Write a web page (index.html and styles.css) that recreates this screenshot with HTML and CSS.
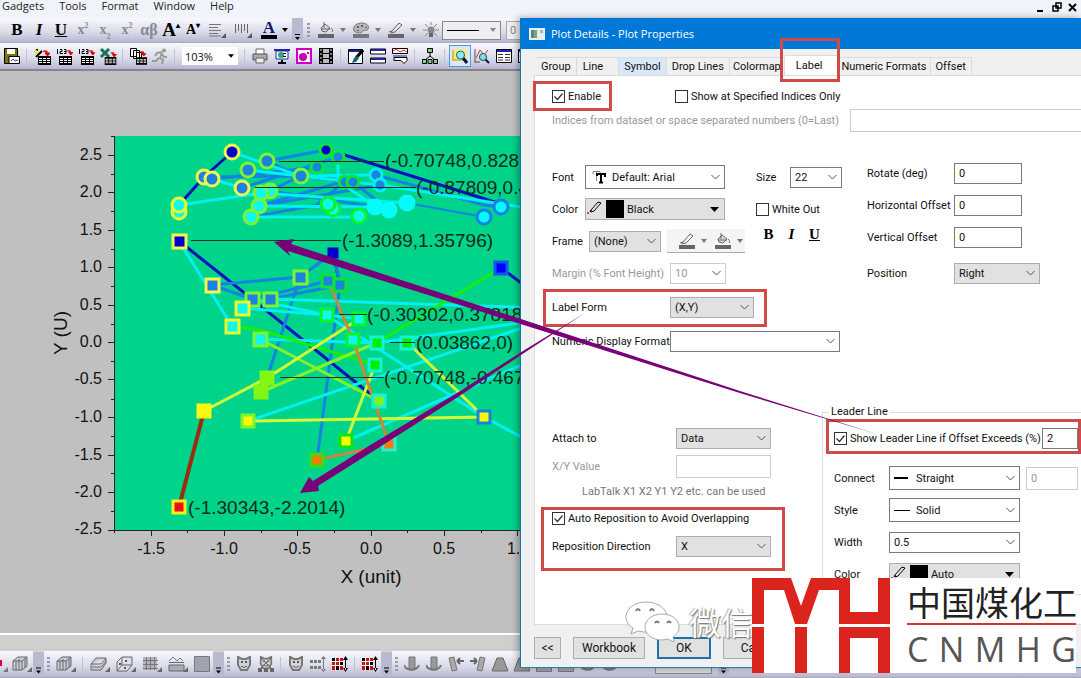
FILE: index.html
```html
<!DOCTYPE html>
<html lang="en">
<head>
<meta charset="utf-8">
<title>Plot Details - Plot Properties</title>
<link rel="stylesheet" href="styles.css">
</head>
<body>
<svg class="defs" aria-hidden="true">
  <defs>
    <symbol id="i-align" viewBox="0 0 18 16"><path d="M1 2.5h12M1 5.5h9M1 8.5h12M1 11.5h9M1 14h12" stroke="#777"/><path d="M18 11v5h-5z" fill="#555"/></symbol>
    <symbol id="i-bars" viewBox="0 0 18 16"><path d="M1.500 2v9M4.500 2v7M7.500 2v9M10.500 2v7M13.500 2v9" stroke="#666"/><path d="M18 11v5h-5z" fill="#555"/></symbol>
    <symbol id="i-down" viewBox="0 0 6 4"><path d="M0 0h6L3 4z" fill="currentColor"/></symbol>
    <symbol id="i-over" viewBox="0 0 11 25"><rect width="11" height="25" fill="#b9b9cf"/><path d="M3 16.500h5" stroke="#000"/><path d="M3 19h5l-2.500 3z"/></symbol>
    <symbol id="i-bucket" viewBox="0 0 16 16"><path d="M3 6l4-4 5 4-4 4-4-1z" fill="#ddd"/><path d="M3 6l4-4 5 4-4 4-4-1zM6 6V0M3 7h9M13 6c2 2 2 3 1 4" fill="none" stroke="#666"/><path d="M0 12h16v4H0z" fill="#666"/></symbol>
    <symbol id="i-palette" viewBox="0 0 16 16"><path d="M1 9C-1 3 5 1 9 1s8 3 6 6c-1 3-4 0-5 2s-5 3-9 0z" fill="#b5b5bd" stroke="#777"/><path d="M4 4h2v2H4zM8 3h2v2H8zM12 5h2v1h-2zM4 8h2v1H4z" fill="#666"/><path d="M0 12h16v4H0z" fill="#777"/></symbol>
    <symbol id="i-pencil" viewBox="0 0 16 16"><path d="M4 9l7-8 3 2-7 7-4 1zM1 10l3-1" fill="none" stroke="#666"/><path d="M0 12h16v4H0z" fill="#666"/></symbol>
    <symbol id="i-bulb" viewBox="0 0 16 16"><path d="M8 0v3M2 2l3 3M14 2l-3 3M0 8h4M12 8h4M2 14l3-3M14 14l-3-3" stroke="#888"/><circle cx="8" cy="8" r="3.500" fill="#888"/><path d="M6 11h4v4H6z" fill="#666"/></symbol>
    <symbol id="i-save" viewBox="0 0 16 16"><path d="M.5.5h13v15H.5z" fill="#770" stroke="#000"/><path d="M3 1h8v5H3z" fill="#fff"/><path d="M5 8.500h10.500v7H5z" fill="#fff" stroke="#000"/><path d="M7 13l2-2 2 2 3-1" fill="none" stroke="#44a"/></symbol>
    <symbol id="i-grid" viewBox="0 0 13 9"><path d="M0 0h13v9H0z"/><path d="M1 2h3v1H1zM5 2h3v1H5zM9 2h3v1H9zM1 4h3v1H1zM5 4h3v1H5zM9 4h3v1H9zM1 6h3v1H1zM5 6h3v1H5zM9 6h3v1H9z" fill="#fff"/></symbol>
    <symbol id="i-redarrow" viewBox="0 0 7 6"><path d="M0 1h4v2M2 3h5L4.500 6z" fill="#d00" stroke="#d00"/></symbol>
    <symbol id="i-wizard" viewBox="0 0 17 17"><path d="M2 9l6-6M1 3l2 1M3 1v2" stroke="#000" stroke-width="2"/><path d="M1 1l4 3-4 3" fill="#ee4"/><use href="#i-redarrow" x="9" y="2" width="7" height="6"/><use href="#i-grid" x="4" y="8" width="13" height="9"/></symbol>
    <symbol id="i-123" viewBox="0 0 17 17"><path d="M1.500 1v5M4 1.500h2v2H4v2h3M8 1.500h2v4H8M8 3.500h2" fill="none" stroke="#000"/><use href="#i-redarrow" x="11" y="2" width="6" height="5"/><use href="#i-grid" x="3" y="8" width="13" height="9"/></symbol>
    <symbol id="i-excel" viewBox="0 0 17 17"><path d="M1 1l8 8M9 1L1 9" stroke="#187060" stroke-width="3"/><use href="#i-redarrow" x="10" y="4" width="7" height="5"/><use href="#i-grid" x="4" y="9" width="13" height="8"/></symbol>
    <symbol id="i-copies" viewBox="0 0 17 17"><path d="M.5.5h6v8h-6zM3.500 2.500h6v8h-6zM6.500 4.500h5v8h-5z" fill="#fff" stroke="#000"/><use href="#i-redarrow" x="10" y="3" width="6" height="5"/><use href="#i-grid" x="6" y="9" width="11" height="8"/></symbol>
    <symbol id="i-run" viewBox="0 0 16 16"><circle cx="12" cy="2.500" r="2" fill="#999"/><path d="M10 4L5 5 3 8M10 5l-2 5 3 2-1 4M7 10l-3 3H0M10 6l2 3h3" fill="none" stroke="#999" stroke-width="2"/></symbol>
    <symbol id="i-print" viewBox="0 0 16 16"><path d="M4 6V1h8v5" fill="#fff" stroke="#666"/><path d="M1 6h14v6H1z" fill="#aaa" stroke="#555"/><path d="M4 10h8v5H4z" fill="#eee" stroke="#666"/></symbol>
    <symbol id="i-screen" viewBox="0 0 16 16"><path d="M0 1h16v2H0z" fill="#22a"/><path d="M2 3h12v8H2z" fill="#fff" stroke="#22a"/><circle cx="7" cy="7" r="3" fill="#2a7"/><path d="M9 5h3v1H9zM9 8h3v1H9zM7 12h2v2h3v2H4v-2h3z" fill="#000"/></symbol>
    <symbol id="i-disc" viewBox="0 0 16 16"><path d="M1 1h14v14H1z" fill="#fff" stroke="#c0b" stroke-width="2"/><circle cx="7" cy="9" r="4" fill="#c0b"/><path d="M11 4h2v2h-2z" fill="#c0b"/></symbol>
    <symbol id="i-film" viewBox="0 0 16 16"><path d="M1 0h14v16H1z"/><path d="M5 1h6v4H5zM5 6h6v4H5zM5 11h6v4H5z" fill="#bbb"/><path d="M3 1v15M13 1v15" stroke="#fff" stroke-dasharray="2 2"/></symbol>
    <symbol id="i-brush" viewBox="0 0 16 16"><path d="M.5 1.500h14v14H.5z" fill="#fff" stroke="#000"/><path d="M1 2h13v2H1z" fill="#22a"/><path d="M15 2L8 10" stroke="#000" stroke-width="3"/><path d="M9 8l2 2-3 4-4 1 2-5z" fill="#167"/></symbol>
    <symbol id="i-bands" viewBox="0 0 16 16"><path d="M.5 1h15v5H.5zM.5 10h15v5H.5z" fill="#fff" stroke="#000"/><path d="M1 1h14v2H1zM1 10h14v2H1z" fill="#22a"/></symbol>
    <symbol id="i-chart" viewBox="0 0 16 16"><path d="M.5.5h15v5H.5zM2 9.500h13v3l-3 3-3-3H2z" fill="#fff" stroke="#000"/><path d="M1 3l3-2 4 3 4-2 3 2" fill="none" stroke="#d22"/><path d="M1 8h14" stroke="#22a"/></symbol>
    <symbol id="i-tree" viewBox="0 0 16 16"><path d="M8 5v4M3 12l5-4 5 4" fill="none" stroke="#000"/><path d="M5.500.5h5v4h-5zM.5 11.500h4v4h-4zM6 11.500h4v4H6zM11.500 11.500h4v4h-4z" fill="#8c8" stroke="#000"/></symbol>
    <symbol id="i-zoom" viewBox="0 0 16 16"><path d="M0 1h15v12H0z" fill="#f5ea86"/><path d="M1 13V2M1 12h14" stroke="#b90"/><path d="M11 10l4 5" stroke="#114" stroke-width="3"/><circle cx="8.500" cy="7" r="4" fill="#8ee" stroke="#168"/></symbol>
    <symbol id="i-find" viewBox="0 0 16 16"><path d="M1 1v14M1 14h5" stroke="#555"/><path d="M2 10l4-8 4 5 4-5" fill="none" stroke="#d33"/><path d="M11 11l4 4" stroke="#114" stroke-width="2"/><circle cx="9" cy="9" r="3.500" fill="#8dd" stroke="#156"/></symbol>
    <symbol id="i-list" viewBox="0 0 16 16"><path d="M.5 1.500h15v13H.5z" fill="#fff" stroke="#000"/><path d="M1 2h14v2H1z" fill="#22a"/><path d="M2 6.500h5M9 6.500h5M2 9.500h5M9 9.500h5M2 12h5M9 12h5" stroke="#333"/></symbol>
    <symbol id="i-cube" viewBox="0 0 20 16"><path d="M1 5l5-4h9v9l-5 4H1zM1 5h9v9M10 5l5-4M4 5v9M7 3v11M13 3v9" fill="#ccd" stroke="#666"/><path d="M20 11v5h-5z" fill="#666"/></symbol>
    <symbol id="i-layers" viewBox="0 0 20 16"><path d="M1 8l5-6h10v5l-5 7H1zM2 8h9l5-6M2 11h9l5-6" fill="#ccd" stroke="#666"/><path d="M20 11v5h-5z" fill="#666"/></symbol>
    <symbol id="i-box" viewBox="0 0 20 16"><path d="M1 6l5-5h10v8l-5 6H1zM6 1v8h10M6 9l-5 6" fill="#dde" stroke="#666"/><path d="M3 7h2v2H3zM9 4h2v2H9zM8 11h2v2H8z" fill="#555"/><path d="M20 11v5h-5z" fill="#666"/></symbol>
    <symbol id="i-mesh" viewBox="0 0 20 16"><path d="M1 1h14v13H1z" fill="#b4b4c0"/><path d="M1 4.500h15M1 8.500h15M1 12.500h15M4.500 1v13M8.500 1v13M12.500 1v13" stroke="#777"/><path d="M20 11v5h-5z" fill="#666"/></symbol>
    <symbol id="i-split" viewBox="0 0 20 16"><path d="M1 5l4-4 4 4 3-3 3 3" fill="none" stroke="#777"/><path d="M1 6.500h15M1 9h15v6H1z" fill="#aab" stroke="#666"/><path d="M20 11v5h-5z" fill="#666"/></symbol>
    <symbol id="i-solid" viewBox="0 0 16 16"><path d="M.5.5h15v15H.5z" fill="#a2a3b2" stroke="#777"/></symbol>
    <symbol id="i-mask" viewBox="0 0 16 16"><path d="M2 1l4 2h4l4-2v8l-3 5H5L2 9z" fill="#d4d4dc" stroke="#777" stroke-width="2"/><path d="M5 5h2v2H5zM9 5h2v2H9z" fill="#555"/><path d="M5 10q3 3 6 0" fill="none" stroke="#555"/></symbol>
    <symbol id="i-maskx" viewBox="0 0 16 16"><use href="#i-mask" width="16" height="14"/><path d="M2 1l12 12M14 1L2 13" stroke="#666"/><path d="M0 12h4v4H0zM6 12h4v4H6zM12 12h4v4h-4z" fill="#666"/></symbol>
    <symbol id="i-dots" viewBox="0 0 16 16"><path d="M0 4h3v3H0zM4 4h3v3H4zM8 4h3v3H8zM0 10h3v3H0zM4 10h3v3H4zM8 10h3v3H8zM13 2h1v12h-1zM11 3l2.500-3L16 3zM11 13l2.500 3 2.500-3z" fill="currentColor"/></symbol>
    <symbol id="i-red" viewBox="0 0 16 16"><path d="M0 2h11v12H0z" fill="#c21414"/><path d="M0 5.500h11M0 9.500h11M3.500 2v12M7.500 2v12" stroke="#fff"/><path d="M0 2h3v3H0zM8 6h3v3H8zM4 10h3v4H4zM13 2h1v12h-1zM11 4l2.500-4L16 4zM11 12l2.500 4 2.500-4z"/></symbol>
    <symbol id="i-rot" viewBox="0 0 16 16"><path d="M5 1h6v13H5z" fill="#999" stroke="#777"/><path d="M0 9c2 6 13 6 15 0" fill="none" stroke="#777" stroke-width="2"/></symbol>
    <symbol id="i-tilt" viewBox="0 0 16 16"><path d="M1 2l5-1 3 13-5 1z" fill="#aaa" stroke="#777"/><path d="M9 5h7M9 5l3-3M9 5l3 3" fill="none" stroke="#666" stroke-width="2"/></symbol>
    <symbol id="i-tiltr" viewBox="0 0 16 16"><path d="M15 2l-5-1-3 13 5 1z" fill="#aaa" stroke="#777"/><path d="M0 5h7M7 5L4 2M7 5L4 8" fill="none" stroke="#666" stroke-width="2"/></symbol>
    <symbol id="i-trap" viewBox="0 0 16 16"><path d="M5 2h6l5 13H0z" fill="#999" stroke="#666"/></symbol>
    <symbol id="i-pen" viewBox="0 0 16 14"><path d="M4 9l7-8 3 1-7 8-3 1zM0 12h2M3 11l1-2" fill="none" stroke="#000"/></symbol>
  </defs>
</svg>

<div class="app">
  <header class="menubar">
    <nav class="menus">
      <button type="button">Gadgets</button><button type="button">Tools</button><button type="button">Format</button><button type="button">Window</button><button type="button">Help</button>
    </nav>
    <svg class="winctl" viewBox="0 0 44 14" aria-hidden="true"><path d="M2 11h6" stroke="#000" stroke-width="2"/><path d="M21 3h5v5h-5zM18 6h5v5h-5z" fill="#fff" stroke="#000" stroke-width="1.500"/><path d="M34 4l7 7M41 4l-7 7" stroke="#000" stroke-width="2"/></svg>
  </header>

  <div class="toolbar format">
    <button type="button" class="cell serif">B</button>
    <button type="button" class="cell serif"><i>I</i></button>
    <button type="button" class="cell serif"><u>U</u></button>
    <button type="button" class="cell serif dim">x<sup>2</sup></button>
    <button type="button" class="cell serif dim">x<sub>2</sub></button>
    <button type="button" class="cell serif dim">x<sup>2</sup></button>
    <button type="button" class="cell serif dim big">αβ</button>
    <button type="button" class="cell serif grow">A<sup>▴</sup></button>
    <button type="button" class="cell serif shrink">A<sup>▾</sup></button>
    <button type="button" class="cell wide"><svg width="18" height="16"><use href="#i-align"/></svg></button>
    <button type="button" class="cell wide"><svg width="18" height="16"><use href="#i-bars"/></svg></button>
    <button type="button" class="cell wide serif"><span class="fontcolor">A</span></button>
    <svg class="drop dark" width="6" height="4"><use href="#i-down"/></svg>
    <svg class="over" width="11" height="25"><use href="#i-over"/></svg>
    <span class="grip"></span>
    <button type="button" class="cell"><svg width="16" height="16"><use href="#i-bucket"/></svg></button>
    <svg class="drop" width="6" height="4"><use href="#i-down"/></svg>
    <button type="button" class="cell"><svg width="16" height="16"><use href="#i-palette"/></svg></button>
    <svg class="drop" width="6" height="4"><use href="#i-down"/></svg>
    <button type="button" class="cell"><svg width="16" height="16"><use href="#i-pencil"/></svg></button>
    <svg class="drop" width="6" height="4"><use href="#i-down"/></svg>
    <button type="button" class="cell"><svg width="16" height="16"><use href="#i-bulb"/></svg></button>
    <button type="button" class="linebox" aria-label="Line style"><span></span><svg width="6" height="4"><use href="#i-down"/></svg></button>
    <input class="zero" value="0" aria-label="Line width">
  </div>

  <div class="toolbar standard">
    <button type="button" class="cell"><svg width="16" height="16"><use href="#i-save"/></svg></button>
    <span class="sep"></span>
    <button type="button" class="cell"><svg width="17" height="17"><use href="#i-wizard"/></svg></button>
    <button type="button" class="cell"><svg width="17" height="17"><use href="#i-123"/></svg></button>
    <button type="button" class="cell"><svg width="17" height="17"><use href="#i-123"/></svg></button>
    <button type="button" class="cell"><svg width="17" height="17"><use href="#i-excel"/></svg></button>
    <span class="sep"></span>
    <button type="button" class="cell"><svg width="17" height="17"><use href="#i-copies"/></svg></button>
    <button type="button" class="cell"><svg width="16" height="16"><use href="#i-run"/></svg></button>
    <span class="sep"></span>
    <select class="zoom" aria-label="Zoom"><option>103%</option></select>
    <span class="sep"></span>
    <button type="button" class="cell"><svg width="16" height="16"><use href="#i-print"/></svg></button>
    <button type="button" class="cell"><svg width="16" height="16"><use href="#i-screen"/></svg></button>
    <button type="button" class="cell"><svg width="16" height="16"><use href="#i-disc"/></svg></button>
    <button type="button" class="cell"><svg width="16" height="16"><use href="#i-film"/></svg></button>
    <span class="sep"></span>
    <button type="button" class="cell"><svg width="16" height="16"><use href="#i-brush"/></svg></button>
    <button type="button" class="cell"><svg width="16" height="16"><use href="#i-bands"/></svg></button>
    <button type="button" class="cell"><svg width="16" height="16"><use href="#i-chart"/></svg></button>
    <span class="sep"></span>
    <button type="button" class="cell"><svg width="16" height="16"><use href="#i-tree"/></svg></button>
    <span class="sep"></span>
    <button type="button" class="cell on"><svg width="16" height="16"><use href="#i-zoom"/></svg></button>
    <button type="button" class="cell"><svg width="16" height="16"><use href="#i-find"/></svg></button>
    <button type="button" class="cell"><svg width="16" height="16"><use href="#i-list"/></svg></button>
    <button type="button" class="cell"><svg width="16" height="16"><use href="#i-list"/></svg></button>
  </div>

  <main class="workspace">
    <svg class="graph" viewBox="0 71 540 562" width="540" height="562">
      <rect x="115" y="136" width="425" height="394" fill="#00d48a"/>
      <g fill="none" stroke-width="3">
        <g stroke="#0010c0"><path d="M179 205L204 177L232 152"/><path d="M338 153L501 204"/><path d="M179 241L252 299L379 401"/><path d="M333 253L340 285"/><path d="M501 268L540 297"/></g>
        <g stroke="#1484e4"><path d="M204 177L300 176L345 181"/><path d="M212 179L317 167"/><path d="M267 161L326 150"/><path d="M242 188L338 157"/><path d="M248 170L353 182L389 210"/><path d="M259 206L380 185"/><path d="M376 175L484 205L501 207"/><path d="M251 217L317 205L345 181L259 206"/><path d="M267 161L300 176L270 191L376 207"/><path d="M212 285L300 277L333 253"/><path d="M212 285L252 299"/><path d="M252 299L328 281"/><path d="M300 277L267 378"/><path d="M333 253L340 285L317 460"/><path d="M270 299L340 285"/></g>
        <g stroke="#00f0f4"><path d="M232 152L300 176L376 175"/><path d="M242 188L212 179"/><path d="M179 205L261 193L407 203"/><path d="M248 170L380 185L540 210"/><path d="M251 217H359"/><path d="M259 206L376 207"/><path d="M338 157V181L376 207"/><path d="M179 241L232 326"/><path d="M242 308L326 315L359 319"/><path d="M270 299L540 308"/><path d="M252 299L326 315"/><path d="M260 339L376 343L540 320"/><path d="M248 421L540 322"/><path d="M346 441L540 357"/><path d="M326 315L484 417L540 447"/></g>
        <path d="M407 203L484 217" stroke="#1484e4" stroke-width="2"/>
        <g stroke="#15ef10"><path d="M232 326L260 330L375 365"/><path d="M376 343L501 268"/></g>
        <g stroke="#83f426"><path d="M260 339L379 401"/><path d="M261 392L376 343"/></g>
        <g stroke="#d5fa35"><path d="M204 411L267 378L359 319"/><path d="M248 421L484 417L407 342"/><path d="M346 441L375 365"/></g>
        <path d="M204 411L179 507" stroke="#982d10" stroke-width="4"/><path d="M328 281L353 340L389 444L317 460" stroke="#c98a38"/>
      </g>
      <g stroke-width="3">
        <g fill="#1c82e2" stroke="#f4f84a"><circle cx="204" cy="177" r="7"/><circle cx="212" cy="179" r="7"/><circle cx="242" cy="188" r="7"/><rect x="206" y="279" width="13" height="13"/></g>
        <g fill="#0000d0" stroke="#f4f84a"><circle cx="232" cy="152" r="7"/><rect x="173" y="235" width="13" height="13"/></g>
        <g fill="#10f8ec" stroke="#eaf82e"><circle cx="179" cy="212" r="7"/><circle cx="179" cy="205" r="7"/></g>
        <g fill="#1c82e2" stroke="#7cf432"><circle cx="267" cy="161" r="7"/><circle cx="248" cy="170" r="7"/><circle cx="301" cy="176" r="7"/><rect x="246" y="293" width="13" height="13"/><rect x="264" y="293" width="13" height="13"/><rect x="294" y="271" width="13" height="13"/></g>
        <g fill="#10f8ec" stroke="#eaf82e"><rect x="236" y="302" width="13" height="13"/><rect x="226" y="320" width="13" height="13"/></g>
        <g fill="#10f8ec" stroke="#7cf432"><circle cx="270" cy="191" r="7"/><circle cx="261" cy="193" r="7"/><circle cx="259" cy="206" r="7"/><circle cx="251" cy="217" r="7"/><rect x="254" y="333" width="13" height="13"/></g>
        <g fill="#1c82e2" stroke="#0be634"><circle cx="338" cy="157" r="6"/><circle cx="317" cy="167" r="6"/><circle cx="345" cy="182" r="6"/><circle cx="353" cy="182" r="6"/><rect x="322" y="275" width="12" height="12"/><rect x="334" y="279" width="12" height="12"/></g>
        <circle cx="326" cy="150" r="6" fill="#0000d0" stroke="#0be634"/>
        <g fill="#10f8ec" stroke="#0cf32a"><circle cx="333" cy="209" r="7"/><circle cx="328" cy="204" r="7"/><circle cx="359" cy="216" r="7"/><rect x="321" y="309" width="12" height="12"/><rect x="353" y="313" width="12" height="12"/><rect x="347" y="334" width="12" height="12"/></g>
        <g fill="#1c82e2" stroke="#08edf0"><circle cx="376" cy="175" r="6"/><circle cx="380" cy="185" r="6"/></g>
        <g fill="#08fbfa" stroke="#08fbfa"><circle cx="375" cy="207" r="7"/><circle cx="389" cy="210" r="7"/><circle cx="407" cy="203" r="7"/></g>
        <g fill="#08fbfa" stroke="#1484e4"><circle cx="501" cy="207" r="7"/><circle cx="484" cy="217" r="7"/></g>
        <g fill="#00f000" stroke="#15f2d8"><rect x="371" y="337" width="12" height="12"/><rect x="401" y="337" width="12" height="12"/><rect x="369" y="359" width="12" height="12"/></g>
        <rect x="373" y="395" width="12" height="12" fill="#80f414" stroke="#15f2d8"/>
        <rect x="329" y="249" width="8" height="8" fill="#0000d0" stroke="#0000d0"/>
        <rect x="495" y="262" width="12" height="12" fill="#0000f8" stroke="#1456ee"/>
        <rect x="478" y="411" width="12" height="12" fill="#f8f800" stroke="#1484e4"/>
        <g fill="#83f614" stroke="#83f614"><rect x="261" y="372" width="12" height="12"/><rect x="255" y="386" width="12" height="12"/></g>
        <rect x="198" y="405" width="12" height="12" fill="#f8f810" stroke="#f8f810"/>
        <rect x="242" y="415" width="12" height="12" fill="#f8f800" stroke="#7cf432"/>
        <rect x="340" y="435" width="12" height="12" fill="#f8f800" stroke="#0ee314"/>
        <rect x="311" y="454" width="12" height="12" fill="#ee7c08" stroke="#36df10"/>
        <rect x="383" y="438" width="12" height="12" fill="#ee7c10" stroke="#30ebd2"/>
        <rect x="173" y="501" width="12" height="12" fill="#e81010" stroke="#f4ee20"/>
      </g>
      <path d="M279 161.500H384M255 187.500H416M191 240.500H341M339 314.500H367M390 342.500H415M280 377.500H384" stroke="#10341f"/>
      <g class="datalabel">
        <text x="385" y="167">(-0.70748,0.828</text><text x="416" y="194">(-0.87809,0.4</text><text x="342" y="247">(-1.3089,1.35796)</text><text x="367" y="321">(-0.30302,0.37818</text><text x="416" y="349">(0.03862,0)</text><text x="384" y="384">(-0.70748,-0.467</text><text x="188" y="514">(-1.30343,-2.2014)</text>
      </g>
      <path d="M114.500 136V530.500H540M108 155.500h6M108 192.500h6M108 230.500h6M108 267.500h6M108 305.500h6M108 342.500h6M108 379.500h6M108 417.500h6M108 455.500h6M108 492.500h6M108 530.500h6M111 136.500h3M111 174.500h3M111 211.500h3M111 249.500h3M111 286.500h3M111 324.500h3M111 361.500h3M111 399.500h3M111 436.500h3M111 473.500h3M111 511.500h3M151.500 530v6M224.500 530v6M297.500 530v6M371.500 530v6M444.500 530v6M517.500 530v6M114.500 530v3M187.500 530v3M261.500 530v3M334.500 530v3M407.500 530v3M481.500 530v3" fill="none" stroke="#222"/>
      <g class="tick end"><text x="102" y="160">2.5</text><text x="102" y="197">2.0</text><text x="102" y="235">1.5</text><text x="102" y="272">1.0</text><text x="102" y="310">0.5</text><text x="102" y="347">0.0</text><text x="102" y="384">-0.5</text><text x="102" y="422">-1.0</text><text x="102" y="460">-1.5</text><text x="102" y="497">-2.0</text><text x="102" y="534">-2.5</text></g>
      <g class="tick mid"><text x="151" y="554">-1.5</text><text x="224" y="554">-1.0</text><text x="297" y="554">-0.5</text><text x="371" y="554">0.0</text><text x="444" y="554">0.5</text><text x="518" y="554">1.0</text></g>
      <g class="axis"><text x="371" y="583">X (unit)</text><text transform="translate(67 333) rotate(-90)">Y (U)</text></g>
    </svg>
  </main>
  <div class="strip"></div>

  <div class="toolbar bottom">
    <svg width="11" height="16"><path d="M0 4h2v6H0z" fill="#e00030"/><path d="M8 11v5H3z" fill="#777"/></svg>
    <button type="button" class="cell"><svg width="20" height="16"><use href="#i-cube"/></svg></button>
    <svg class="over" width="11" height="26"><use href="#i-over"/></svg>
    <span class="grip"></span>
    <button type="button" class="cell wide"><svg width="20" height="16"><use href="#i-cube"/></svg></button>
    <span class="sep"></span>
    <button type="button" class="cell wide"><svg width="20" height="16"><use href="#i-layers"/></svg></button>
    <button type="button" class="cell wide"><svg width="20" height="16"><use href="#i-box"/></svg></button>
    <button type="button" class="cell wide"><svg width="20" height="16"><use href="#i-mesh"/></svg></button>
    <button type="button" class="cell wide"><svg width="20" height="16"><use href="#i-split"/></svg></button>
    <button type="button" class="cell"><svg width="16" height="16"><use href="#i-solid"/></svg></button>
    <svg class="over" width="11" height="26"><use href="#i-over"/></svg>
    <span class="grip"></span>
    <button type="button" class="cell"><svg width="16" height="16"><use href="#i-mask"/></svg></button>
    <button type="button" class="cell"><svg width="16" height="16"><use href="#i-maskx"/></svg></button>
    <span class="sep"></span>
    <button type="button" class="cell"><svg width="16" height="16"><use href="#i-mask"/></svg></button>
    <button type="button" class="cell gray"><svg width="16" height="16"><use href="#i-dots"/></svg></button>
    <button type="button" class="cell"><svg width="16" height="16"><use href="#i-red"/></svg></button>
    <span class="sep"></span>
    <button type="button" class="cell"><svg width="16" height="16"><use href="#i-red"/></svg></button>
    <svg class="over" width="11" height="26"><use href="#i-over"/></svg>
    <span class="grip"></span>
    <button type="button" class="cell"><svg width="16" height="16"><use href="#i-rot"/></svg></button>
    <button type="button" class="cell"><svg width="16" height="16"><use href="#i-rot"/></svg></button>
    <button type="button" class="cell"><svg width="16" height="16"><use href="#i-tilt"/></svg></button>
    <button type="button" class="cell"><svg width="16" height="16"><use href="#i-tiltr"/></svg></button>
    <button type="button" class="cell"><svg width="16" height="16"><use href="#i-trap"/></svg></button>
    <button type="button" class="cell"><svg width="16" height="16"><use href="#i-trap"/></svg></button>
    <button type="button" class="cell"><svg width="16" height="16"><use href="#i-solid"/></svg></button>
    <button type="button" class="cell"><svg width="16" height="16"><use href="#i-solid"/></svg></button>
    <button type="button" class="cell"><svg width="16" height="16"><use href="#i-rot"/></svg></button>
    <button type="button" class="cell"><svg width="16" height="16"><use href="#i-rot"/></svg></button>
    <span class="slot"></span>
    <svg class="over" width="11" height="26"><use href="#i-over"/></svg>
  </div>
</div>

<section class="dialog" role="dialog" aria-labelledby="dlg-title">
  <div class="titlebar">
    <svg width="16" height="12" viewBox="0 0 16 12" aria-hidden="true"><path d="M0 0h16v12H0z" fill="#e4f0ee"/><path d="M2 2h6v8H2z" fill="#59848c"/><path d="M5 2h3v8H5z" fill="#7da66f"/><path d="M11 2h3v3h-3z" fill="#9bc"/></svg>
    <h1 id="dlg-title">Plot Details - Plot Properties</h1>
  </div>
  <div class="tabs" role="tablist">
    <button type="button" role="tab">Group</button><button type="button" role="tab" class="line">Line</button><button type="button" role="tab" class="hot">Symbol</button><button type="button" role="tab">Drop Lines</button><button type="button" role="tab" class="tight">Colormap</button><button type="button" role="tab" class="active" aria-selected="true">Label</button><button type="button" role="tab" class="tight">Numeric Formats</button><button type="button" role="tab">Offset</button>
  </div>
  <form class="panel">
    <div class="toprow">
      <label class="check"><input type="checkbox" checked>Enable</label>
      <label class="check"><input type="checkbox">Show at Specified Indices Only</label>
    </div>
    <div class="indices">
      <label for="indices">Indices from dataset or space separated numbers (0=Last)</label>
      <input id="indices" disabled>
    </div>

    <div class="upper">
      <div class="texts">
        <div class="row">
          <label for="font" class="l-s">Font</label>
          <span class="pick w140"><svg width="14" height="14" viewBox="0 0 14 14"><path d="M1 4V1.500h7V4M4.500 2v9" fill="none" stroke="#888"/><path d="M5 6V4h8v3M9 4v9M7 12.500h4" fill="none" stroke="#000" stroke-width="2"/></svg><select id="font" class="white tall"><option>Default: Arial</option></select></span>
          <label for="size" class="l-size">Size</label>
          <select id="size" class="white w52"><option>22</option></select>
        </div>
        <div class="row">
          <label for="color" class="l-s">Color</label>
          <span class="pick ink w140"><svg width="40" height="18" viewBox="0 0 40 18"><use href="#i-pen" x="1" y="1" width="16" height="14"/><path d="M20 0h18v18H20z"/></svg><select id="color" class="solid"><option>Black</option></select></span>
          <label class="check push"><input type="checkbox">White Out</label>
        </div>
        <div class="row">
          <label for="frame" class="l-m">Frame</label>
          <select id="frame" class="w72"><option>(None)</option></select>
          <div class="mini">
            <button type="button" aria-label="Border color"><svg width="16" height="16"><use href="#i-pencil"/></svg></button><svg class="drop" width="6" height="4"><use href="#i-down"/></svg>
            <button type="button" aria-label="Fill color"><svg width="16" height="16"><use href="#i-bucket"/></svg></button><svg class="drop" width="6" height="4"><use href="#i-down"/></svg>
          </div>
          <div class="biu"><button type="button">B</button><button type="button"><i>I</i></button><button type="button"><u>U</u></button></div>
        </div>
        <div class="row">
          <label for="margin" class="l-l off">Margin (% Font Height)</label>
          <select id="margin" class="white w56" disabled><option>10</option></select>
        </div>
        <div class="row high">
          <label for="form" class="l-l">Label Form</label>
          <select id="form" class="w84"><option>(X,Y)</option></select>
        </div>
        <div class="row">
          <label for="numfmt" class="l-l">Numeric Display Format</label>
          <select id="numfmt" class="white w170"><option></option></select>
        </div>
      </div>
      <div class="place">
        <div class="row"><label for="rot">Rotate (deg)</label><input id="rot" value="0"></div>
        <div class="row"><label for="hoff">Horizontal Offset</label><input id="hoff" value="0"></div>
        <div class="row"><label for="voff">Vertical Offset</label><input id="voff" value="0"></div>
        <div class="row pos"><label for="pos">Position</label><select id="pos" class="w86"><option>Right</option></select></div>
      </div>
    </div>

    <div class="lower">
      <div class="attach">
        <div class="row"><label for="attach">Attach to</label><select id="attach" class="w95"><option>Data</option></select></div>
        <div class="row"><label for="xy" class="off">X/Y Value</label><input id="xy" class="w95" disabled></div>
        <p class="hint">LabTalk X1 X2 Y1 Y2 etc. can be used</p>
        <div class="row"><label class="check"><input type="checkbox" checked>Auto Reposition to Avoid Overlapping</label></div>
        <div class="row"><label for="dir">Reposition Direction</label><select id="dir" class="w95"><option>X</option></select></div>
      </div>
      <fieldset class="leader">
        <legend>Leader Line</legend>
        <div class="row first"><label class="check"><input type="checkbox" checked>Show Leader Line if Offset Exceeds (%)</label><input value="2" class="w36" aria-label="Offset percent"></div>
        <div class="row"><label for="conn">Connect</label><span class="pick dash bold w131"><svg width="14" height="2"><path d="M0 1h14" stroke="#000" stroke-width="2"/></svg><select id="conn" class="white tall"><option>Straight</option></select></span><input class="w52" value="0" disabled aria-label="Connect value"></div>
        <div class="row"><label for="style">Style</label><span class="pick dash w131"><svg width="16" height="1"><path d="M0 .5h16" stroke="#000"/></svg><select id="style" class="white tall"><option>Solid</option></select></span></div>
        <div class="row"><label for="width">Width</label><select id="width" class="white w131"><option>0.5</option></select></div>
        <div class="row"><label for="lcolor">Color</label><span class="pick ink w131"><svg width="40" height="18" viewBox="0 0 40 18"><use href="#i-pen" x="1" y="1" width="16" height="14"/><path d="M20 0h18v18H20z"/></svg><select id="lcolor" class="solid"><option>Auto</option></select></span></div>
      </fieldset>
    </div>
  </form>
  <div class="actions">
    <button type="button" class="b-fold">&lt;&lt;</button><button type="button" class="b-book">Workbook</button><button type="button" class="b-ok">OK</button><button type="button" class="b-cancel">Cancel</button>
  </div>
</section>

<svg class="notes" width="1081" height="678" aria-hidden="true">
  <g fill="none" stroke="#cd4c4a" stroke-width="3"><path d="M534.500 82.500h76v27h-76zM781.500 39.500h57v41h-57zM544.500 290.500h221v35h-221zM542.500 508.500h241v61h-241zM827.500 420.500h252v32h-252z"/></g>
  <g fill="#780078"><path d="M274 242L294 239L291 244L530 322L743 392L880 435L743 394L530 327L288 251L290 256z"/><path d="M300 493L309 477L313 481L372 444L457 393L523 351L585 313L524 353L458 397L375 450L318 486L319 491z"/></g>
</svg>

<div class="watermark">
  <svg width="56" height="42" viewBox="0 0 56 42" aria-hidden="true"><g fill="#fff" stroke="#aaa"><path d="M21 1C9 1 1 8 1 16c0 5 3 9 7 11l-2 6 7-3c16 4 29-3 29-14C42 8 33 1 21 1z"/><path d="M37 13c-10 0-17 6-17 13s7 13 17 13l6-1 6 3-1-5c4-3 6-6 6-10 0-7-7-13-17-13z"/></g><path d="M11 10q2-4 4 0M25 10q2-4 4 0M30 22q2-3 4 0M42 22q2-3 4 0" fill="none" stroke="#777" stroke-width="2"/></svg>
  <span>微信</span>
</div>

<aside class="brand">
  <svg width="138" height="95" viewBox="0 0 138 95" aria-hidden="true"><path fill="#dc241f" d="M0 0h39l10 28L59 0h39v34h28V0h12v46H87V12H67L55 46H43L32 12H12v34H0zM0 49h12v46H0zM43 49h12v46H43zM87 49h51v46h-12V60H98v35H87z"/></svg>
  <div class="words"><strong>中国煤化工</strong><div class="latin"><span>C</span><span>N</span><span>M</span><span>H</span><span>G</span></div></div>
</aside>
</body>
</html>
```

FILE: styles.css
```css
* { box-sizing: border-box; }
body { margin: 0; height: 100vh; overflow: hidden; position: relative; font: 11px Roboto, "Liberation Sans", sans-serif; color: #111; background: #c0c0c0; }
button, input, select { font: inherit; color: inherit; margin: 0; border-radius: 0; }
button { padding: 0; border: 0; background: none; }
svg { display: block; flex: none; }
.defs { position: absolute; width: 0; height: 0; }

/* application frame */
.app { display: flex; flex-direction: column; height: 100%; }
.menubar { display: flex; justify-content: space-between; height: 18px; background: #f1f3fa; }
.menus { display: flex; gap: 15px; align-items: flex-start; padding-left: 2px; }
.menus button { font: 11px/12px "Open Sans", sans-serif; color: #222; }
.winctl { width: 44px; height: 14px; margin-right: 2px; }
.toolbar { display: flex; align-items: center; overflow: hidden; border-bottom: 1px solid #a9a9bd; background: linear-gradient(#f8f8fd, #d9dae8 60%, #b7b8cf); }
.format { flex: 0 0 25px; padding-left: 6px; }
.standard { flex: 0 0 28px; padding-left: 1px; border-bottom: 2px solid #85858f; }
.bottom { flex: 0 0 27px; }
.cell { flex: 0 0 22px; height: 22px; display: flex; align-items: center; justify-content: center; }
.cell.wide { flex-basis: 26px; }
.cell.on { background: #d7e9f8; border: 1px solid #4a9be0; }
.gray { color: #777; }
.serif { font: bold 17px/20px "Liberation Serif", serif; color: #000; }
.serif.dim { font-size: 14px; color: #888a96; }
.serif.big { font-size: 16px; }
.serif.grow { font-size: 19px; }
.serif.shrink { font-size: 14px; }
.serif sup, .serif sub { font-size: 8px; line-height: 8px; }
.serif sup { align-self: flex-start; margin-top: 3px; }
.serif sub { align-self: flex-end; }
.fontcolor { line-height: 14px; border-bottom: 4px solid #000; color: #15156a; padding: 0 2px; }
.drop { color: #777; margin: 0 4px 0 3px; }
.drop.dark { color: #000; margin: 0 4px 0 0; }
.over { align-self: stretch; }
.grip { flex: 0 0 3px; height: 15px; margin: 0 5px 0 4px; background: repeating-linear-gradient(#9999ab 0 2px, transparent 2px 4px); }
.bottom .grip { margin: 0 3px; }
.sep { flex: 0 0 1px; height: 14px; margin: 0 4px 0 3px; background: #c0c0ce; }
.linebox { flex: 0 0 57px; height: 19px; margin: 0 5px 0 0; display: flex; align-items: center; gap: 11px; padding: 0 4px; border: 1px solid #888; background: #eeeef2; color: #888; }
.linebox span { width: 32px; height: 1px; background: #000; }
.zero { width: 40px; height: 19px; padding: 0 3px; border: 1px solid #aaa; color: #888; background: #eee; flex: none; }
.zoom { flex: 0 0 56px; height: 18px; margin: 0 3px; border: 0; padding: 0 3px; font: 11px "Open Sans", sans-serif; }
.bottom .slot { flex: 0 0 57px; height: 20px; background: #d8d8dc; border: 1px solid #888; margin: 0 6px 0 34px; }
.workspace { flex: 1; min-height: 0; overflow: hidden; background: #c0c0c0; }
.strip { flex: 0 0 18px; border-top: 2px solid #fff; background: #cfcfcf; }
.graph { font-family: "Liberation Sans", Arial, sans-serif; }
.datalabel { font-size: 19px; fill: #102a1c; }
.tick { font-size: 16px; fill: #111; }
.end { text-anchor: end; }
.mid, .axis { text-anchor: middle; }
.axis { font-size: 19px; fill: #111; }

/* dialog window */
.dialog { position: absolute; left: 520px; right: 0; top: 18px; bottom: 10px; display: flex; flex-direction: column; border-left: 1px solid #0b78b8; border-bottom: 1px solid #2283a5; background: #f0f0f0; box-shadow: -2px 0 7px #0005; overflow: hidden; }
.titlebar { flex: 0 0 31px; display: flex; align-items: center; gap: 6px; padding-left: 8px; background: #0078d7; color: #fff; }
.titlebar h1 { margin: 0; font: 11px "Open Sans", sans-serif; }
.tabs { flex: 0 0 26px; display: flex; align-items: flex-end; padding-left: 15px; }
.tabs button { height: 18px; padding: 0 5px; border: 1px solid #dcdcdc; border-width: 1px 1px 0 0; white-space: nowrap; }
.tabs .line { padding: 0 15px 0 6px; }
.tabs .hot { background: #d8e8f8; }
.tabs .tight { padding: 0 3px; }
.tabs .active { height: 20px; background: #fff; padding: 0 15px 0 11px; }
.panel { flex: 1; min-height: 0; margin-left: 13px; padding: 8px 0 0 17px; border: 1px solid #dcdcdc; border-right: 0; background: #fff; overflow: hidden; }
.row { display: flex; align-items: center; height: 32px; white-space: nowrap; }
.off { color: #999; }
.check { display: flex; align-items: center; gap: 3px; white-space: nowrap; }
.check input { appearance: none; flex: none; width: 13px; height: 13px; border: 1px solid #333; background: #fff; }
.check input:checked { background: url("data:image/svg+xml,%3Csvg xmlns='http://www.w3.org/2000/svg' viewBox='0 0 11 11'%3E%3Cpath d='M1.500 5.500l3 3 5-6' fill='none' stroke='%23333' stroke-width='1.200'/%3E%3C/svg%3E") center / 11px; }
.toprow { display: grid; grid-template-columns: 123px 1fr; height: 24px; }
.indices { display: grid; grid-template-columns: 298px 1fr; align-items: center; height: 24px; color: #999; }
.panel input:not([type=checkbox]) { height: 21px; min-width: 0; padding: 0 4px; border: 1px solid #7a7a7a; background: #fff; }
.panel input:disabled:not([type=checkbox]) { height: 23px; border-color: #ccc; color: #999; }
.panel .indices input { border-right: 0; }
select { appearance: none; }
select:disabled { opacity: 1; }
.dialog select { height: 21px; padding: 0 18px 0 4px; border: 1px solid #adadad; background: #e1e1e1 url("data:image/svg+xml,%3Csvg xmlns='http://www.w3.org/2000/svg' viewBox='0 0 9 6'%3E%3Cpath d='M.5 1l4 4 4-4' fill='none' stroke='%23555'/%3E%3C/svg%3E") no-repeat right 4px center / 9px 6px; }
.dialog select.white { background-color: #fff; border-color: #7a7a7a; }
.dialog select:disabled { border-color: #ccc; color: #999; }
.dialog select.tall { height: 24px; }
.dialog select.solid, .zoom { background: #e1e1e1 url("data:image/svg+xml,%3Csvg xmlns='http://www.w3.org/2000/svg' viewBox='0 0 9 5'%3E%3Cpath d='M0 0h9L4.500 5z'/%3E%3C/svg%3E") no-repeat right 5px center / 9px 5px; }
.toolbar .zoom { background-color: #fff; background-size: 6px 4px; background-position: right 4px center; }
.pick { position: relative; display: block; }
.pick svg { position: absolute; left: 7px; top: 5px; }
.dialog .pick select { width: 100%; padding-left: 26px; }
.dialog .ink select { padding-left: 41px; height: 22px; }
.pick.ink svg { left: 1px; top: 2px; }
.pick.dash svg { left: 5px; top: 12px; }
.pick.bold svg { top: 11px; }
.w36 { width: 36px; } .w52 { width: 52px; } .w56 { width: 56px; } .w72 { width: 72px; } .w84 { width: 84px; } .w86 { width: 86px; } .w95 { width: 95px; } .w131 { width: 131px; } .w140 { width: 140px; } .w170 { width: 170px; }
.upper { display: grid; grid-template-columns: 315px 1fr; margin-top: 25px; }
.texts { padding-top: 4px; }
.high { height: 36px; }
.l-s { width: 33px; } .l-m { width: 37px; } .l-l { width: 118px; }
.l-size { width: 34px; margin-left: 31px; }
.push { margin-left: 31px; }
.mini { display: flex; align-items: center; width: 78px; height: 24px; margin-left: 6px; padding-left: 12px; background: #f4f4f4; border-bottom: 1px solid #aaa; }
.mini .drop { margin: 0 8px 0 6px; }
.biu { display: flex; gap: 10px; margin: -14px 0 0 17px; }
.biu button { width: 13px; font: bold 15px "Liberation Serif", serif; color: #000; }
.place .row label { width: 87px; }
.place .row input { width: 68px; }
.place .pos { height: 40px; }
.lower { display: grid; grid-template-columns: 270px 1fr; margin-top: 48px; }
.attach { padding-top: 19px; }
.attach .row { height: 28px; }
.attach .row > label:not(.check) { width: 124px; }
.hint { margin: 0 0 0 30px; height: 24px; line-height: 24px; color: #777; }
.leader { margin: 0; padding: 3px 0 4px 11px; border: 1px solid #dcdcdc; border-right: 0; min-width: 0; }
.leader legend { margin-left: -5px; padding: 0 2px; line-height: 14px; }
.leader .row > label:not(.check) { width: 55px; }
.leader .first { margin-bottom: 8px; }
.leader .w36 { flex: none; margin-left: 1px; }
.leader .w52 { margin-left: 6px; }
.actions { flex: 0 0 42px; display: flex; align-items: center; gap: 12px; padding: 3px 0 0 13px; }
.actions button { height: 22px; border: 1px solid #adadad; background: #e1e1e1; font-size: 12px; }
.b-fold { width: 27px; } .b-book { width: 72px; } .b-ok { width: 54px; } .b-cancel { width: 72px; }
.actions .b-ok { border: 2px solid #1a72a8; }

/* markup drawn over the windows */
.notes { position: absolute; left: 0; top: 0; pointer-events: none; }
.watermark { position: absolute; left: 625px; top: 601px; display: flex; gap: 8px; }
.watermark span { font: 32px/40px "Noto Sans CJK SC", sans-serif; color: #fff; text-shadow: 1px 1px 1px #777, -1px 0 1px #aaa; }
.brand { position: absolute; right: 5px; bottom: 5px; display: flex; gap: 17px; background: #fff; }
.words { width: 169px; display: flex; flex-direction: column; }
.words strong { height: 47px; border-bottom: 2px solid #d9302c; font: 34px/48px "Noto Sans CJK SC", sans-serif; color: #222; white-space: nowrap; }
.latin { display: flex; justify-content: space-between; font: 34px/48px "Open Sans", sans-serif; color: #555; }
```
